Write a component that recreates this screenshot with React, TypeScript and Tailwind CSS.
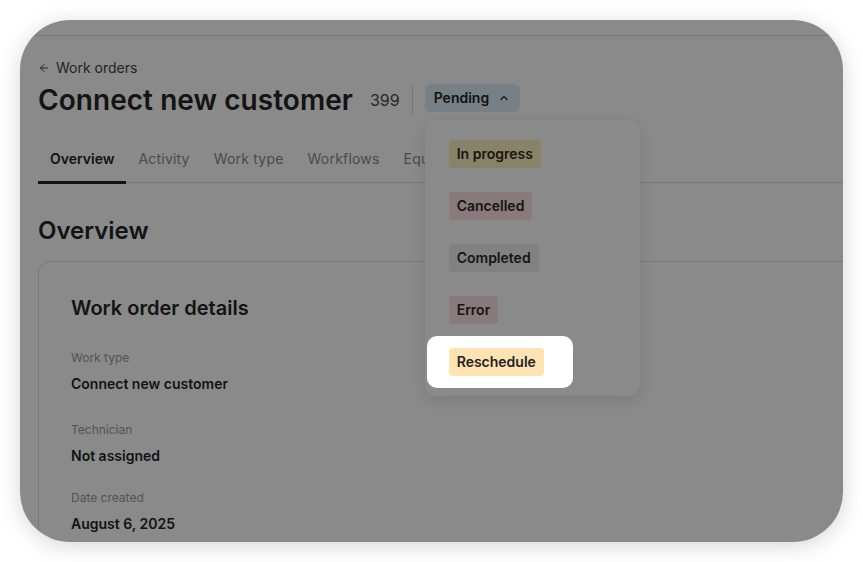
import React from "react";
import { ArrowLeft, ChevronUp } from "lucide-react";

const tabs = ["Overview", "Activity", "Work type", "Workflows", "Equipment", "Notes"];

const statuses = [
  { label: "In progress", bg: "bg-[#fbf1bf]" },
  { label: "Cancelled", bg: "bg-[#fde3e3]" },
  { label: "Completed", bg: "bg-[#efefef]" },
  { label: "Error", bg: "bg-[#fde3e3]" },
  { label: "Reschedule", bg: "bg-[#ffe3b3]", active: true },
];

const details = [
  { label: "Work type", value: "Connect new customer", gap: "" },
  { label: "Technician", value: "Not assigned", gap: "mt-7" },
  { label: "Date created", value: "August 6, 2025", gap: "mt-6" },
];

const StatusMenu: React.FC = () => (
  <div className="absolute left-0 top-[36px] w-[215px] rounded-xl bg-white py-2 shadow-[0_4px_16px_rgba(0,0,0,0.12)]">
    {statuses.map((s) =>
      s.active ? (
        <div key={s.label} className="relative z-20 mx-[2px] w-[146px] rounded-[10px] bg-white px-[22px] py-3">
          <span className={`inline-flex h-7 items-center rounded-[4px] px-2 text-sm font-semibold text-[#222] ${s.bg}`}>
            {s.label}
          </span>
        </div>
      ) : (
        <div key={s.label} className="mx-[2px] px-[22px] py-3">
          <span className={`inline-flex h-7 items-center rounded-[4px] px-2 text-sm font-semibold text-[#2a2a2a] ${s.bg}`}>
            {s.label}
          </span>
        </div>
      )
    )}
  </div>
);

export default function App() {
  return (
    <div className="h-[562px] w-[863px] bg-white p-5 font-['Inter','Liberation_Sans',sans-serif]">
      <div className="relative h-[522px] w-[823px] overflow-hidden rounded-[50px] bg-white shadow-[0_4px_22px_rgba(0,0,0,0.16)]">
        <div className="h-[16px] border-b border-[#dcdcdc]" />

        <div className="pl-[18px]">
          <div className="mt-[22px] flex h-5 items-center gap-[6px] text-sm text-[#3f3f3f]">
            <ArrowLeft className="h-3 w-3" strokeWidth={2} />
            <span>Work orders</span>
          </div>

          <div className="mt-1 flex h-9 items-center">
            <h1 className="text-[28px] font-semibold tracking-[0.05px] text-[#262626]">Connect new customer</h1>
            <span className="ml-[17px] text-base text-[#4a4a4a]">399</span>
            <div className="ml-3 h-[31px] w-px bg-[#dcdcdc]" />
            <div className="relative mb-1 ml-3">
              <div className="flex h-7 items-center gap-[9px] rounded-md bg-[#dceef6] pl-[9px] pr-[10px] text-sm font-semibold text-[#262626]">
                <span>Pending</span>
                <ChevronUp className="h-3 w-3" strokeWidth={2.5} />
              </div>
              <StatusMenu />
            </div>
          </div>

          <div className="mt-[18px] flex border-b border-[#dcdcdc]">
            {tabs.map((t, i) =>
              i === 0 ? (
                <div key={t} className="relative flex h-[46px] items-center px-3 text-sm font-semibold text-[#262626]">
                  {t}
                  <div className="absolute -bottom-[2px] left-0 right-0 h-[3px] bg-[#262626]" />
                </div>
              ) : (
                <div key={t} className="flex h-[46px] items-center px-3 text-sm tracking-[0.2px] text-[#8a8a8a]">
                  {t}
                </div>
              )
            )}
          </div>

          <h2 className="mt-8 text-2xl font-semibold text-[#262626]">Overview</h2>

          <div className="mt-[14px] w-[880px] rounded-xl border border-[#e2e2e2] px-8 pt-8">
            <h3 className="text-xl font-semibold text-[#262626]">Work order details</h3>
            <div className="mt-7 flex flex-col">
              {details.map((d) => (
                <div key={d.label} className={`flex flex-col gap-2 ${d.gap}`}>
                  <span className="text-xs text-[#9a9a9a]">{d.label}</span>
                  <span className="text-sm font-semibold text-[#262626]">{d.value}</span>
                </div>
              ))}
            </div>
            <div className="h-10" />
          </div>
        </div>

        <div className="absolute inset-0 z-10 bg-black/[0.46]" />
      </div>
    </div>
  );
}
